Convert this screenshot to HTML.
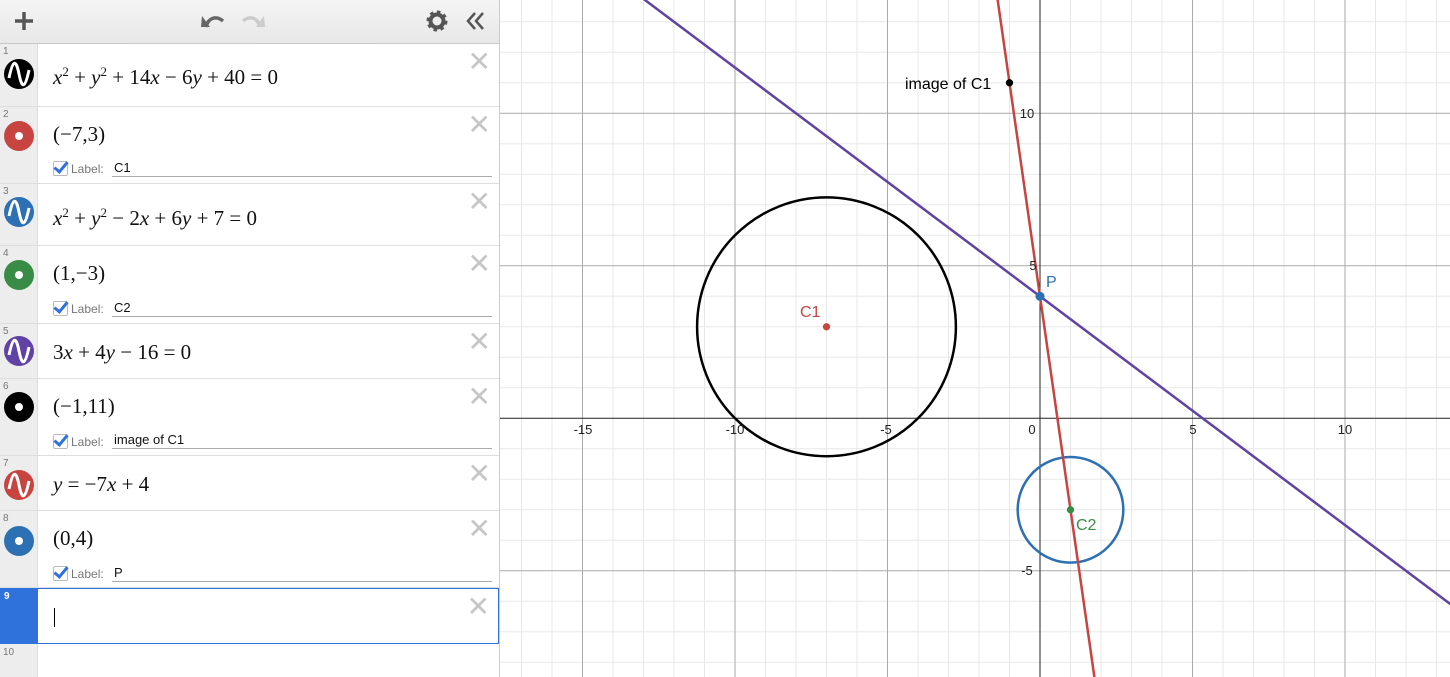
<!DOCTYPE html><html><head><style>
body{margin:0;width:1450px;height:677px;overflow:hidden;font-family:"Liberation Sans",sans-serif;background:#fff;position:relative}
#panel{position:absolute;left:0;top:0;width:499px;height:677px;border-right:1px solid #ccc;background:#fff;z-index:2;overflow:hidden}
#hdr{height:43px;background:linear-gradient(#f4f4f4,#e8e8e8);border-bottom:1px solid #c8c8c8;position:relative}
.row{position:absolute;left:0;width:499px;border-bottom:1px solid #ddd}
.g{position:absolute;left:0;top:0;bottom:0;width:37px;background:#ededed;border-right:1px solid #ddd}
.n{position:absolute;left:3px;top:2px;font-size:10px;color:#777}
.ic{position:absolute;left:4px;width:30px;height:30px;border-radius:50%}
.dot::after{content:"";position:absolute;left:11px;top:11px;width:8px;height:8px;border-radius:50%;background:#fff}
.m{position:absolute;left:53px;font-family:"Liberation Serif",serif;font-size:21px;color:#111;white-space:nowrap}
.m i{font-style:italic}.m sup{font-size:13px}
.x{position:absolute;right:8px;color:#c6c6c6;font-size:28px;line-height:20px}
.lb{position:absolute;left:53px;font-size:12px;color:#777}
.cb{display:inline-block;width:13px;height:13px;border:1px solid #bbb;border-radius:2px;vertical-align:-3px;margin-right:3px;position:relative}
.cb::after{content:"";position:absolute;left:3px;top:-3px;width:5px;height:11px;border:solid #2f72dc;border-width:0 3px 3px 0;transform:rotate(40deg)}
.li{position:absolute;left:112px;right:7px;border-bottom:1px solid #aaa;font-size:13px;color:#111;padding-left:2px;height:16px}
</style></head><body>
<svg width="1450" height="677" style="position:absolute;left:0;top:0">
<g transform="translate(1040,418.3) scale(30.5,-30.5)" fill="none">
<g stroke="#e8e8e8" stroke-width="1">
<path vector-effect="non-scaling-stroke" d="M-18,-9V14M-17,-9V14M-16,-9V14M-14,-9V14M-13,-9V14M-12,-9V14M-11,-9V14M-9,-9V14M-8,-9V14M-7,-9V14M-6,-9V14M-4,-9V14M-3,-9V14M-2,-9V14M-1,-9V14M1,-9V14M2,-9V14M3,-9V14M4,-9V14M6,-9V14M7,-9V14M8,-9V14M9,-9V14M11,-9V14M12,-9V14M13,-9V14
M-18,-9H14M-18,-8H14M-18,-7H14M-18,-6H14M-18,-4H14M-18,-3H14M-18,-2H14M-18,-1H14M-18,1H14M-18,2H14M-18,3H14M-18,4H14M-18,6H14M-18,7H14M-18,8H14M-18,9H14M-18,11H14M-18,12H14M-18,13H14"/></g>
<path stroke="#aaa" vector-effect="non-scaling-stroke" d="M-15,-9V14M-10,-9V14M-5,-9V14M5,-9V14M10,-9V14M-18,-5H14M-18,5H14M-18,10H14"/>
<path stroke="#222" vector-effect="non-scaling-stroke" d="M0,-9V14M-18,0H14"/>
<circle cx="-7" cy="3" r="4.2426" stroke="#000" stroke-width="2.5" vector-effect="non-scaling-stroke"/>
<circle cx="1" cy="-3" r="1.732" stroke="#2d70b3" stroke-width="2.5" vector-effect="non-scaling-stroke"/>
<path d="M-18,17.5L14,-6.5" stroke="#6042a6" stroke-width="2.5" vector-effect="non-scaling-stroke"/>
<path d="M-1.5,14.5L2,-10" stroke="#c74440" stroke-width="2.5" vector-effect="non-scaling-stroke"/>
<circle cx="-7" cy="3" r="0.12" fill="#c74440"/>
<circle cx="1" cy="-3" r="0.12" fill="#388c46"/>
<circle cx="-1" cy="11" r="0.12" fill="#000"/>
<circle cx="0" cy="4" r="0.15" fill="#2d70b3"/>
</g>
<g font-size="13" fill="#222" text-anchor="middle">
<text x="583" y="434">-15</text><text x="735" y="434">-10</text><text x="886" y="434">-5</text><text x="1032" y="434">0</text><text x="1193" y="434">5</text><text x="1345" y="434">10</text>
<text x="1027" y="118">10</text><text x="1033" y="270">5</text><text x="1027" y="575">-5</text></g>
<g font-size="16"><text x="905" y="89" fill="#000">image of C1</text><text x="800" y="317" fill="#c74440">C1</text><text x="1076" y="530" fill="#388c46">C2</text><text x="1046" y="287" fill="#2d70b3">P</text></g>
</svg>
<div id="panel">
<div id="hdr">
<svg width="499" height="43" style="position:absolute;left:0;top:0">
<path d="M24,12V30M15,21H33" stroke="#555" stroke-width="3.5"/>
<path d="M206,27 C208,18 216,15 223,21" stroke="#666" stroke-width="3.5" fill="none"/><path d="M202,16L210,27L201,27Z" fill="#666"/>
<path d="M260,27 C258,18 250,15 243,21" stroke="#ccc" stroke-width="3.5" fill="none"/><path d="M264,16L256,27L265,27Z" fill="#ccc"/>
<circle cx="437" cy="21" r="6.5" fill="none" stroke="#555" stroke-width="4"/><circle cx="437" cy="21" r="9" fill="none" stroke="#555" stroke-width="3" stroke-dasharray="3.5 3.5"/>
<path d="M475,13L468,21L475,29M483,13L476,21L483,29" stroke="#555" stroke-width="2.5" fill="none"/>
</svg></div>
<div class="row" style="top:44px;height:62px"><div class="g"><span class="n">1</span><div class="ic" style="top:15px;background:#000"><svg width="30" height="30"><path d="M5,19C9,0 12,0 15,15S21,30 25,11" stroke="#fff" stroke-width="3" fill="none"/></svg></div></div><div class="m" style="top:20px"><i>x</i><sup>2</sup> + <i>y</i><sup>2</sup> + 14<i>x</i> − 6<i>y</i> + 40 = 0</div><span class="x" style="top:8px">✕</span></div>
<div class="row" style="top:107px;height:76px"><div class="g"><span class="n">2</span><div class="ic dot" style="top:14px;background:#c74440"></div></div><div class="m" style="top:15px">(−7,3)</div><span class="x" style="top:8px">✕</span><div class="lb" style="top:54px"><span class="cb"></span>Label:</div><div class="li" style="top:53px">C1</div></div>
<div class="row" style="top:184px;height:61px"><div class="g"><span class="n">3</span><div class="ic" style="top:13px;background:#2d70b3"><svg width="30" height="30"><path d="M5,19C9,0 12,0 15,15S21,30 25,11" stroke="#fff" stroke-width="3" fill="none"/></svg></div></div><div class="m" style="top:21px"><i>x</i><sup>2</sup> + <i>y</i><sup>2</sup> − 2<i>x</i> + 6<i>y</i> + 7 = 0</div><span class="x" style="top:8px">✕</span></div>
<div class="row" style="top:246px;height:77px"><div class="g"><span class="n">4</span><div class="ic dot" style="top:14px;background:#388c46"></div></div><div class="m" style="top:15px">(1,−3)</div><span class="x" style="top:8px">✕</span><div class="lb" style="top:55px"><span class="cb"></span>Label:</div><div class="li" style="top:54px">C2</div></div>
<div class="row" style="top:324px;height:54px"><div class="g"><span class="n">5</span><div class="ic" style="top:12px;background:#6042a6"><svg width="30" height="30"><path d="M5,19C9,0 12,0 15,15S21,30 25,11" stroke="#fff" stroke-width="3" fill="none"/></svg></div></div><div class="m" style="top:16px">3<i>x</i> + 4<i>y</i> − 16 = 0</div><span class="x" style="top:8px">✕</span></div>
<div class="row" style="top:379px;height:76px"><div class="g"><span class="n">6</span><div class="ic dot" style="top:13px;background:#000"></div></div><div class="m" style="top:15px">(−1,11)</div><span class="x" style="top:8px">✕</span><div class="lb" style="top:55px"><span class="cb"></span>Label:</div><div class="li" style="top:53px">image of C1</div></div>
<div class="row" style="top:456px;height:54px"><div class="g"><span class="n">7</span><div class="ic" style="top:14px;background:#c74440"><svg width="30" height="30"><path d="M5,19C9,0 12,0 15,15S21,30 25,11" stroke="#fff" stroke-width="3" fill="none"/></svg></div></div><div class="m" style="top:16px"><i>y</i> = −7<i>x</i> + 4</div><span class="x" style="top:8px">✕</span></div>
<div class="row" style="top:511px;height:76px"><div class="g"><span class="n">8</span><div class="ic dot" style="top:15px;background:#2d70b3"></div></div><div class="m" style="top:15px">(0,4)</div><span class="x" style="top:8px">✕</span><div class="lb" style="top:55px"><span class="cb"></span>Label:</div><div class="li" style="top:54px">P</div></div>
<div class="row" style="top:588px;height:54px;border:1px solid #2f72dc;width:497px"><div class="g" style="background:#2f72dc;border:0;width:37px"><span class="n" style="color:#fff;font-weight:bold">9</span></div><div style="position:absolute;left:53px;top:19px;width:1px;height:19px;background:#000"></div><span class="x" style="top:8px">✕</span></div>
<div class="row" style="top:644px;height:33px;border:0"><div class="g"><span class="n" style="top:3px">10</span></div></div>
</div>
</body></html>
